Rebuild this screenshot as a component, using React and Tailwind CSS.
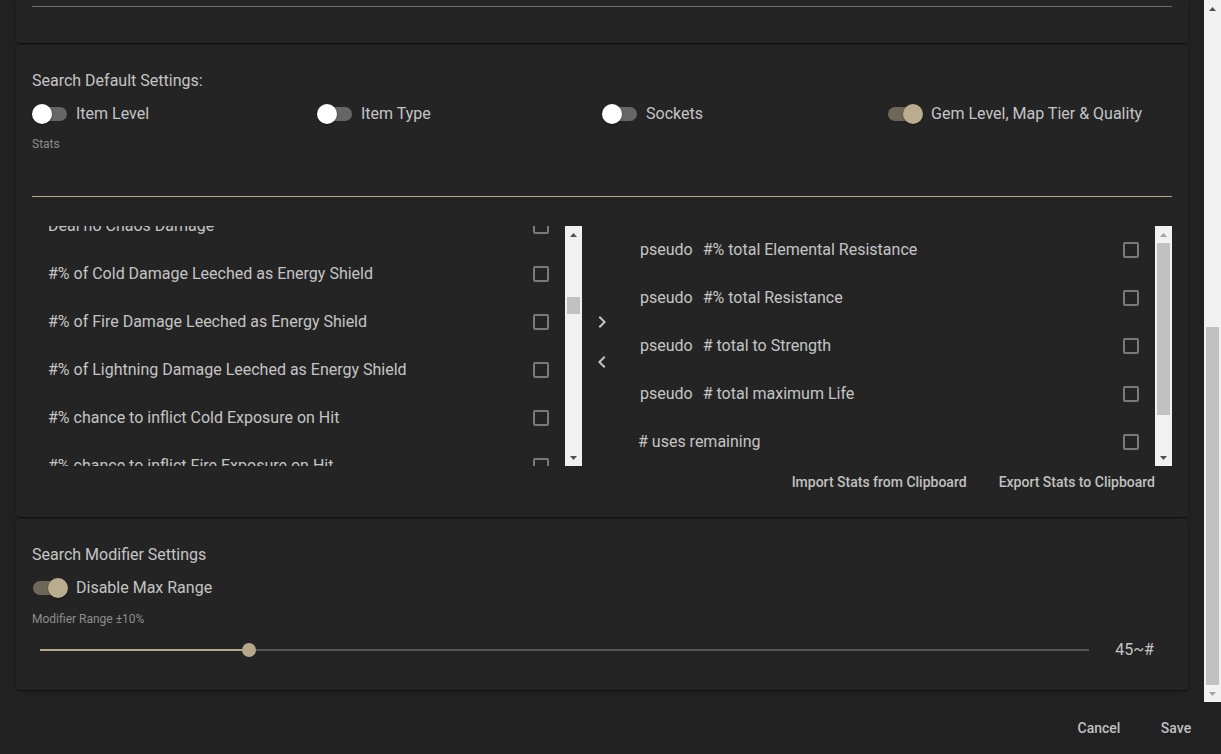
import React from "react";

const leftItems = [
  "Deal no Chaos Damage",
  "#% of Cold Damage Leeched as Energy Shield",
  "#% of Fire Damage Leeched as Energy Shield",
  "#% of Lightning Damage Leeched as Energy Shield",
  "#% chance to inflict Cold Exposure on Hit",
  "#% chance to inflict Fire Exposure on Hit",
];

const rightItems = [
  { p: true, t: "#% total Elemental Resistance" },
  { p: true, t: "#% total Resistance" },
  { p: true, t: "# total to Strength" },
  { p: true, t: "# total maximum Life" },
  { p: false, t: "# uses remaining" },
];

function Switch({ on }) {
  return (
    <span className="relative inline-block w-9 h-5 shrink-0">
      <span
        className={
          on
            ? "absolute left-[1px] top-[3px] w-[34px] h-[14px] rounded-full bg-[#6e6757]"
            : "absolute left-[1px] top-[3px] w-[34px] h-[14px] rounded-full bg-[#666666]"
        }
      />
      <span
        className={
          on
            ? "absolute top-0 left-4 w-5 h-5 rounded-full bg-[#b9ad8d] shadow-[0_1px_2px_rgba(0,0,0,0.4)]"
            : "absolute top-0 left-0 w-5 h-5 rounded-full bg-white shadow-[0_1px_2px_rgba(0,0,0,0.4)]"
        }
      />
    </span>
  );
}

function Toggle({ on, label }) {
  return (
    <div className="flex items-center gap-2 h-6">
      <Switch on={on} />
      <span className="text-base leading-6 text-[#c4c4c4]">{label}</span>
    </div>
  );
}

function Checkbox() {
  return <span className="block w-4 h-4 shrink-0 border-2 border-[#7a7a7a] rounded-[2px]" />;
}

function Tri({ up, disabled }) {
  return (
    <svg width="7" height="4" viewBox="0 0 7 4">
      <path d={up ? "M0 4 L3.5 0 L7 4 Z" : "M0 0 L7 0 L3.5 4 Z"} fill={disabled ? "#a3a3a3" : "#505050"} />
    </svg>
  );
}

function ScrollBar({ thumbTop, thumbHeight, upDisabled, downDisabled }) {
  return (
    <div className="w-[17px] h-full shrink-0 flex flex-col bg-[#f1f1f1]">
      <div className="h-[17px] shrink-0 flex items-center justify-center">
        <Tri up disabled={upDisabled} />
      </div>
      <div className="relative flex-1">
        <div
          className="absolute left-[2px] right-[2px] bg-[#c1c1c1]"
          style={{ top: thumbTop, height: thumbHeight }}
        />
      </div>
      <div className="h-[17px] shrink-0 flex items-center justify-center">
        <Tri disabled={downDisabled} />
      </div>
    </div>
  );
}

const cardCls =
  "mx-4 bg-[#242424] shadow-[0_2px_1px_-1px_rgba(0,0,0,0.25),0_1px_1px_0_rgba(0,0,0,0.18),0_1px_3px_0_rgba(0,0,0,0.15)]";

function ArrowRight() {
  return (
    <svg width="24" height="24" viewBox="0 0 24 24" fill="#c4c4c4">
      <path d="M8.59 16.59 13.17 12 8.59 7.41 10 6l6 6-6 6z" />
    </svg>
  );
}
function ArrowLeft() {
  return (
    <svg width="24" height="24" viewBox="0 0 24 24" fill="#c4c4c4">
      <path d="M15.41 16.59 10.83 12l4.58-4.59L14 6l-6 6 6 6z" />
    </svg>
  );
}

export default function App() {
  return (
    <div className="w-full h-[754px] flex flex-col overflow-hidden bg-[#212121] [font-family:Roboto,'Liberation_Sans',sans-serif] text-[#c4c4c4]">
      <div className="h-[702px] shrink-0 flex">
        <div className="flex-1 min-w-0 overflow-hidden pb-3">
          {/* General settings card (top part scrolled out of view) */}
          <div className={cardCls + " rounded-b-[4px] h-[43px] px-4 pt-[6px]"}>
            <div className="h-px bg-[#6d6d6d]" />
          </div>

          {/* Search Default Settings */}
          <div className={cardCls + " rounded-[4px] mt-[2px] px-4 pt-[24px] pb-[19px]"}>
            <div className="text-base leading-6 text-[#c4c4c4]">Search Default Settings:</div>
            <div className="grid grid-cols-4 mt-[9px]">
              <Toggle on={false} label="Item Level" />
              <Toggle on={false} label="Item Type" />
              <Toggle on={false} label="Sockets" />
              <Toggle on={true} label="Gem Level, Map Tier & Quality" />
            </div>
            <div className="mt-[10px] text-xs leading-4 text-[#8d8d8d]">Stats</div>
            <div className="h-[44px]" />
            <div className="h-px bg-[#b5a98a]" />

            <div className="mt-[29px] flex h-[240px]">
              <div className="w-[550px] h-[240px] flex">
                <div className="flex-1 min-w-0 overflow-hidden">
                  <div className="-mt-6">
                    {leftItems.map((t, i) => (
                      <div key={i} className="h-12 flex items-center justify-between px-4">
                        <span className="text-base text-[#c4c4c4] whitespace-nowrap">{t}</span>
                        <Checkbox />
                      </div>
                    ))}
                  </div>
                </div>
                <ScrollBar thumbTop={54} thumbHeight={17} />
              </div>
              <div className="w-10 flex flex-col items-center justify-center pb-2">
                <div className="h-10 flex items-center justify-center">
                  <ArrowRight />
                </div>
                <div className="h-10 flex items-center justify-center">
                  <ArrowLeft />
                </div>
              </div>
              <div className="w-[550px] h-[240px] flex">
                <div className="flex-1 min-w-0 overflow-hidden">
                  {rightItems.map((it, i) => (
                    <div key={i} className="h-12 flex items-center justify-between px-4">
                      <span className="text-base text-[#c4c4c4] whitespace-nowrap">
                        {it.p ? (
                          <>
                            <span className="ml-[2px] mr-[10px]">pseudo</span>
                            {it.t}
                          </>
                        ) : (
                          it.t
                        )}
                      </span>
                      <Checkbox />
                    </div>
                  ))}
                </div>
                <ScrollBar thumbTop={0} thumbHeight={172} upDisabled />
              </div>
            </div>

            <div className="h-[32px] flex items-center justify-end gap-4 pr-[9px]">
              <button className="px-2 text-sm font-medium text-[#c0c0c0]">Import Stats from Clipboard</button>
              <button className="px-2 text-sm font-medium text-[#c0c0c0]">Export Stats to Clipboard</button>
            </div>
          </div>

          {/* Search Modifier Settings */}
          <div className={cardCls + " rounded-[4px] mt-[2px] px-4 pt-[24px] pb-[26px]"}>
            <div className="text-base leading-6 text-[#c4c4c4]">Search Modifier Settings</div>
            <div className="mt-[9px]">
              <Toggle on={true} label="Disable Max Range" />
            </div>
            <div className="mt-[11px] text-xs leading-4 text-[#8d8d8d]">Modifier Range ±10%</div>
            <div className="mt-[9px] h-7 flex items-center">
              <div className="flex-1 px-2">
                <div className="relative h-[2px] bg-[#555555]">
                  <div className="absolute left-0 top-0 h-[2px] bg-[#b5a98a]" style={{ width: "19.9%" }} />
                  <div
                    className="absolute top-1/2 w-[14px] h-[14px] -ml-[7px] -mt-[7px] rounded-full bg-[#b5a98a]"
                    style={{ left: "19.9%" }}
                  />
                </div>
              </div>
              <div className="w-[75px] text-center text-base text-[#c4c4c4]">45~#</div>
            </div>
          </div>
        </div>
        <ScrollBar thumbTop={310} thumbHeight={358} downDisabled />
      </div>

      <div className="flex-1 flex items-center justify-end gap-[13px] pr-[13px]">
        <button className="w-16 h-9 text-sm font-medium text-[#c0c0c0]">Cancel</button>
        <button className="w-16 h-9 text-sm font-medium text-[#c0c0c0]">Save</button>
      </div>
    </div>
  );
}
